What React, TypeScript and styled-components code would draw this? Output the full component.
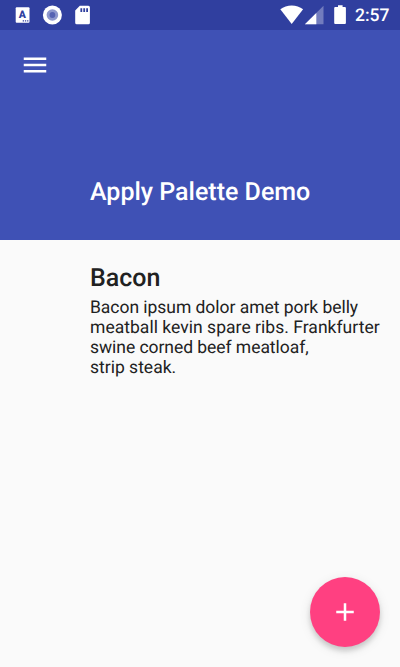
import React from "react";
import styled, { createGlobalStyle } from "styled-components";

const GlobalStyle = createGlobalStyle`
  * { box-sizing: border-box; }
  body { margin: 0; background: #fafafa; overflow: hidden; }
`;

const Screen = styled.div`
  position: relative;
  display: flex;
  flex-direction: column;
  width: 400px;
  height: 667px;
  background: #fafafa;
  font-family: Roboto, "Liberation Sans", sans-serif;
  text-rendering: geometricPrecision;
`;

const StatusBar = styled.header`
  display: flex;
  justify-content: space-between;
  height: 30px;
  padding: 0 9px 0 12px;
  background: #303f9f;
  color: #fff;
`;

const StatusIcons = styled.svg`
  display: block;
  height: 30px;
`;

const BadgeLetter = styled.text`
  fill: #303f9f;
  font-size: 10.5px;
  font-weight: 900;
  text-anchor: middle;
`;

const StatusGroup = styled.div`
  display: flex;
`;

const Clock = styled.time`
  width: 36px;
  margin-left: 6px;
  font-size: 17.5px;
  font-weight: 500;
  line-height: 32px;
  white-space: nowrap;
`;

const AppBar = styled.section`
  display: flex;
  flex-direction: column;
  justify-content: space-between;
  height: 210px;
  padding: 20px 20px 32px;
  background: #3f51b5;
`;

const MenuButton = styled.button`
  display: flex;
  width: 30px;
  height: 30px;
  padding: 0;
  border: 0;
  background: none;
`;

const Title = styled.h1`
  margin: 0 0 0 70px;
  color: #fff;
  font-size: 25px;
  font-weight: 500;
  line-height: 30px;
  white-space: nowrap;
`;

const Content = styled.main`
  padding: 24px 0 0 90px;
  color: #212121;
`;

const Heading = styled.h2`
  margin: 0;
  font-size: 25px;
  font-weight: 500;
  line-height: 30px;
`;

const Body = styled.p`
  margin: 4px 0 0;
  font-size: 17.5px;
  line-height: 20px;
  white-space: nowrap;
`;

const Line = styled.span<{ $tracking: number }>`
  display: block;
  letter-spacing: ${({ $tracking }) => $tracking}px;
`;

const Fab = styled.button`
  position: absolute;
  right: 20px;
  bottom: 20px;
  display: flex;
  align-items: center;
  justify-content: center;
  width: 70px;
  height: 70px;
  padding: 0;
  border: 0;
  border-radius: 50%;
  background: #ff4081;
  box-shadow: 0 4px 5px rgba(0, 0, 0, 0.14), 0 3px 12px rgba(0, 0, 0, 0.1);
`;

const lines = [
  { text: "Bacon ipsum dolor amet pork belly", tracking: -0.04 },
  { text: "meatball kevin spare ribs. Frankfurter", tracking: 0.03 },
  { text: "swine corned beef meatloaf,", tracking: -0.05 },
  { text: "strip steak.", tracking: 0 },
];

export default function App() {
  return (
    <Screen>
      <GlobalStyle />
      <StatusBar>
        <StatusIcons width="80" viewBox="12 0 80 30" fill="#fff">
          <rect x="15.7" y="7.3" width="13.8" height="15.5" rx="1" />
          <BadgeLetter x="22.4" y="18.4">A</BadgeLetter>
          <path d="M22.7 20.2h1.3v1.3h-1.3zM24.9 20.2h1.3v1.3h-1.3zM27.1 20.2h1.3v1.3h-1.3z" fill="#303f9f" />
          <circle cx="52.4" cy="15" r="9.5" />
          <circle cx="52.4" cy="15" r="5.8" fill="#8d97cd" />
          <circle cx="52.4" cy="15" r="2.9" fill="#5562b3" />
          <path d="M79.8 5.8h8.6a1.5 1.5 0 0 1 1.5 1.5v15.4a1.5 1.5 0 0 1-1.5 1.5H76.7a1.5 1.5 0 0 1-1.5-1.5V10.6z" />
          <path d="M80.4 8.2h1.8v3.7h-1.8zM83.3 8.2h1.8v3.7h-1.8zM86.2 8.2H88v3.7h-1.8z" fill="#303f9f" />
        </StatusIcons>
        <StatusGroup>
          <StatusIcons width="71" viewBox="278 0 71 30" fill="#fff">
            <path d="M291.7 24 280.3 9.3C283.5 7 287.5 5.6 291.7 5.6S299.9 7 303.1 9.3z" />
            <path d="M323.5 5.7v18.6h-18.6z" fillOpacity="0.32" />
            <path d="M316.3 12.9v11.4h-11.4z" />
            <path d="M338 5.2h4.6v1.9h2.3a1 1 0 0 1 1 1v14.8a1 1 0 0 1-1 1h-9.7a1 1 0 0 1-1-1V8.1a1 1 0 0 1 1-1h2.8z" />
          </StatusIcons>
          <Clock>2:57</Clock>
        </StatusGroup>
      </StatusBar>
      <AppBar>
        <MenuButton aria-label="Menu">
          <svg width="30" height="30" viewBox="0 0 24 24" fill="#fff">
            <path d="M3 18h18v-2H3v2zm0-5h18v-2H3v2zm0-7v2h18V6H3z" />
          </svg>
        </MenuButton>
        <Title>Apply Palette Demo</Title>
      </AppBar>
      <Content>
        <Heading>Bacon</Heading>
        <Body>
          {lines.map((line) => (
            <Line key={line.text} $tracking={line.tracking}>
              {line.text}
            </Line>
          ))}
        </Body>
      </Content>
      <Fab aria-label="Add">
        <svg width="30" height="30" viewBox="0 0 24 24" fill="#fff">
          <path d="M19 13h-6v6h-2v-6H5v-2h6V5h2v6h6v2z" />
        </svg>
      </Fab>
    </Screen>
  );
}
